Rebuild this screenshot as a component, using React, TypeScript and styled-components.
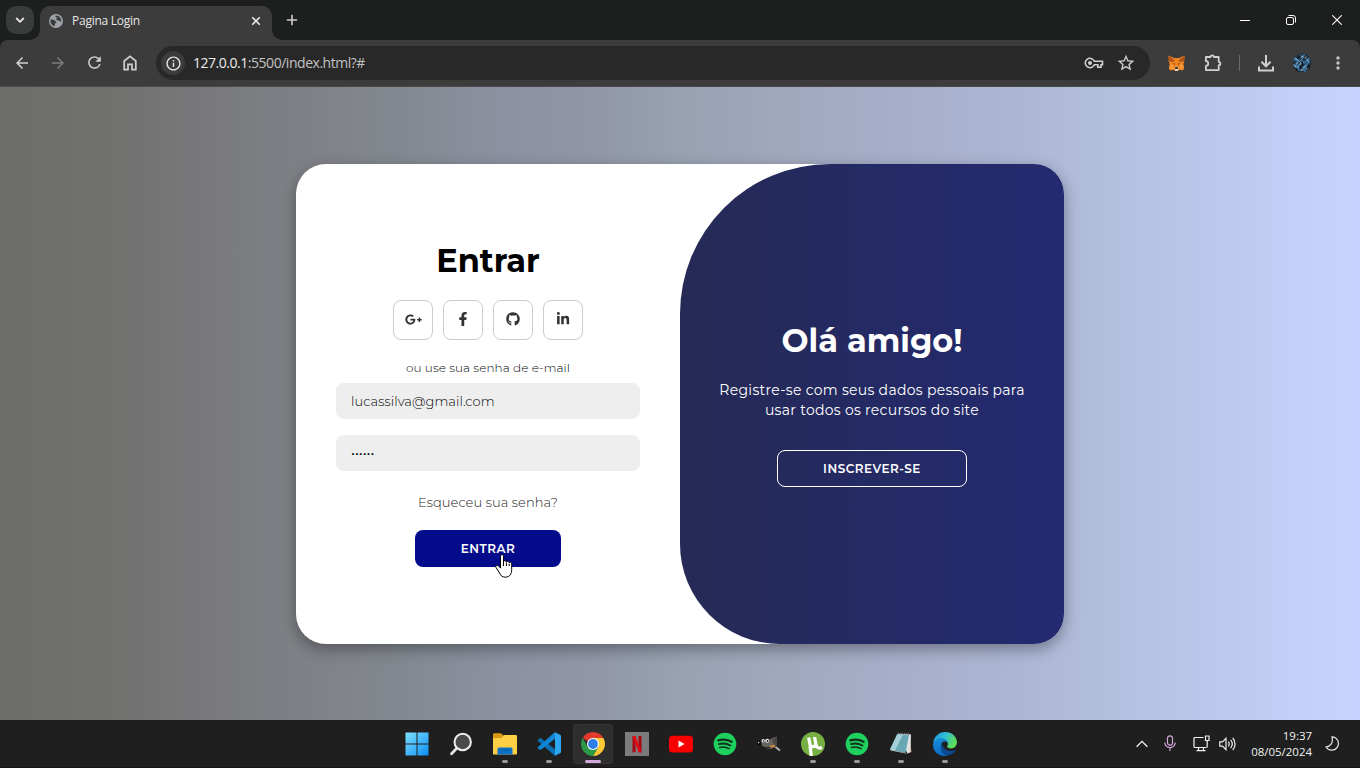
import React from "react";
import styled, { createGlobalStyle } from "styled-components";
import { FaGooglePlusG, FaFacebookF, FaGithub, FaLinkedinIn } from "react-icons/fa";
import {
  MdArrowBack,
  MdArrowForward,
  MdRefresh,
  MdInfoOutline,
  MdStarOutline,
  MdMoreVert,
} from "react-icons/md";

const GlobalStyle = createGlobalStyle`
  * { box-sizing: border-box; }
  body { margin: 0; overflow: hidden; background: #1c1f1e; }
  button, input { font-family: inherit; margin: 0; }
`;

const uiFont = `"Segoe UI", "Open Sans", "Noto Sans", sans-serif`;
const pageFont = `Montserrat, Inter, sans-serif`;

const Screen = styled.div`
  width: 1360px;
  height: 768px;
  display: flex;
  flex-direction: column;
  overflow: hidden;
  font-family: ${uiFont};
`;

/* ---------- browser ---------- */

const TabStrip = styled.header`
  height: 40px;
  flex: none;
  display: flex;
  background: #1c1f1e;
  padding-left: 6px;
`;

const TabSearch = styled.button`
  width: 28px;
  height: 28px;
  margin-top: 6px;
  border: 0;
  padding: 0;
  border-radius: 10px;
  background: #3a3b3b;
  display: grid;
  place-items: center;
`;

const Tab = styled.div`
  position: relative;
  width: 232px;
  height: 34px;
  margin: 6px 0 0 6px;
  padding: 0 10px 5px 9px;
  border-radius: 10px 10px 0 0;
  background: #3c3c3c;
  display: flex;
  align-items: center;
  color: #e6e6e6;

  &::before,
  &::after {
    content: "";
    position: absolute;
    bottom: 0;
    width: 10px;
    height: 10px;
  }
  &::before {
    left: -10px;
    background: radial-gradient(circle at 0 0, transparent 9.5px, #3c3c3c 10px);
  }
  &::after {
    right: -10px;
    background: radial-gradient(circle at 100% 0, transparent 9.5px, #3c3c3c 10px);
  }
`;

const TabTitle = styled.span`
  flex: 1;
  margin-left: 9px;
  font-size: 12px;
  letter-spacing: -0.25px;
`;

const NewTab = styled.div`
  margin: 14px 0 0 14px;
  height: 12px;
  display: flex;
`;

const WindowButtons = styled.div`
  margin-left: auto;
  height: 40px;
  display: flex;
`;

const WindowButton = styled.div`
  width: 46px;
  display: grid;
  place-items: center;
`;

const ToolbarBack = styled.div`
  height: 47px;
  flex: none;
  background: #1c1f1e;
`;

const Toolbar = styled.div`
  height: 47px;
  padding-bottom: 1px;
  border-radius: 8px 8px 0 0;
  background: #3c3c3c;
  border-bottom: 1px solid #4a4a4b;
  display: flex;
  align-items: center;
  color: #c7c7c7;
`;

const NavButton = styled.div<{ $dim?: boolean }>`
  width: 36px;
  height: 34px;
  display: grid;
  place-items: center;
  color: ${(p) => (p.$dim ? "#7c7c7c" : "#cfcfcf")};
`;

const NavGroup = styled.div`
  display: flex;
  padding: 0 8px 0 4px;
`;

const AddressBar = styled.div`
  width: 994px;
  height: 34px;
  flex: none;
  margin-top: 1px;
  border-radius: 17px;
  background: #282828;
  display: flex;
  align-items: center;
  padding: 0 14px 0 5px;
`;

const SiteInfo = styled.span`
  width: 24px;
  height: 24px;
  border-radius: 50%;
  background: #3c3c3c;
  color: #e6e6e6;
  display: grid;
  place-items: center;
`;

const Url = styled.span`
  flex: 1;
  margin-left: 8px;
  padding-bottom: 2px;
  font-size: 14px;
  letter-spacing: -0.47px;
  color: #c3c3c3;

  b {
    font-weight: 400;
    color: #ececec;
  }
`;

const AddressActions = styled.span`
  display: flex;
  align-items: center;
  gap: 12px;
  color: #d0d0d0;
`;

const Extensions = styled.div`
  width: 194px;
  flex: none;
  overflow: hidden;
  display: flex;
  align-items: center;
  margin: 1px 0 0 16px;
`;

const Slot = styled.span<{ $w: number }>`
  width: ${(p) => p.$w}px;
  height: 24px;
  flex: none;
  display: grid;
  place-items: center;
`;

const Separator = styled.span`
  width: 1px;
  height: 16px;
  flex: none;
  background: #6a6a6a;
`;

/* ---------- login page ---------- */

const Page = styled.main`
  height: 633px;
  flex: none;
  padding-top: 77px;
  font-family: ${pageFont};
  background: linear-gradient(
    to right,
    #6c6d6a 0,
    #727271 130px,
    #7b7c80 240px,
    #7f8187 310px,
    #838890 400px,
    #8b91a0 500px,
    #9197a8 600px,
    #98a2b2 680px,
    #a0a8bd 780px,
    #a7aeca 900px,
    #abb5d2 1000px,
    #b1bedc 1100px,
    #bac7ea 1200px,
    #c1cef5 1280px,
    #c8d4ff 1360px
  );
`;

const Card = styled.section`
  width: 768px;
  height: 480px;
  margin: 0 auto;
  border-radius: 30px;
  background: #fff;
  overflow: hidden;
  box-shadow: 0 5px 15px rgba(0, 0, 0, 0.35);
  display: flex;
`;

const Form = styled.form`
  width: 384px;
  padding: 77px 40px 0;
  display: flex;
  flex-direction: column;
  align-items: center;
`;

const Title = styled.h1`
  margin: 0;
  height: 40px;
  font-size: 32px;
  line-height: 40px;
  font-weight: 700;
  white-space: nowrap;
`;

const SocialRow = styled.div`
  display: flex;
  gap: 10px;
  margin: 19px 0 20px;
`;

const SocialLink = styled.a`
  width: 40px;
  height: 40px;
  padding-bottom: 2px;
  border: 1px solid #ccc;
  border-radius: 8px;
  display: grid;
  place-items: center;
  color: #333;
`;

const Hint = styled.span`
  height: 16px;
  font-size: 12px;
  line-height: 16px;
  font-weight: 300;
  color: #000;
  white-space: nowrap;
  letter-spacing: 0.09px;
`;

const Field = styled.input`
  width: 304px;
  height: 36px;
  flex: none;
  border: 0;
  border-radius: 8px;
  padding: 0 15px;
  background: #eee;
  font-size: 13px;
  font-weight: 300;
  color: #000;
  letter-spacing: 0.07px;

  & + & {
    margin-top: 16px;
  }
  ${Hint} + & {
    margin-top: 7px;
  }
  &[type="password"] {
    font-weight: 400;
    color: #000;
  }
`;

const Forgot = styled.a`
  height: 16px;
  margin: 23px 0 20px;
  font-size: 13px;
  line-height: 16px;
  font-weight: 300;
  color: #222;
  white-space: nowrap;
  letter-spacing: 0.08px;
`;

const Button = styled.button<{ $outline?: boolean }>`
  width: ${(p) => (p.$outline ? 190 : 146)}px;
  height: 37px;
  padding: 0;
  border: 1px solid ${(p) => (p.$outline ? "#fff" : "transparent")};
  border-radius: 8px;
  background: ${(p) => (p.$outline ? "transparent" : "#050c8c")};
  color: #fff;
  font-size: 12px;
  font-weight: 600;
  letter-spacing: 0.5px;
`;

const Welcome = styled.div`
  width: 384px;
  padding: 157px 30px 0;
  border-radius: 150px 0 0 100px;
  background: linear-gradient(to right, #262a55, #242a62 45%, #232a70);
  color: #fff;
  display: flex;
  flex-direction: column;
  align-items: center;
`;

const Message = styled.p`
  margin: 19px 0 30px;
  font-size: 14px;
  line-height: 20px;
  text-align: center;
  white-space: nowrap;
  letter-spacing: 0.3px;
`;

const Pointer = styled.svg`
  position: absolute;
  left: 495px;
  top: 554px;
`;

/* ---------- taskbar ---------- */

const Taskbar = styled.footer`
  height: 48px;
  flex: none;
  background: #1f1f1f;
  border-bottom: 1px solid #1c1219;
  display: flex;
`;

const Apps = styled.div`
  display: flex;
  gap: 4px;
  margin-left: 396.500px;
  padding-top: 4px;
`;

const AppButton = styled.div<{ $active?: boolean }>`
  width: 40px;
  height: 40px;
  position: relative;
  border-radius: 4px;
  display: grid;
  place-items: center;
  background: ${(p) => (p.$active ? "#2e2e2e" : "transparent")};
  box-shadow: ${(p) => (p.$active ? "inset 0 0 0 1px #363636" : "none")};
`;

const Indicator = styled.i<{ $active?: boolean }>`
  position: absolute;
  bottom: 1px;
  left: ${(p) => (p.$active ? 12 : 17)}px;
  width: ${(p) => (p.$active ? 16 : 6)}px;
  height: 3px;
  border-radius: 2px;
  background: ${(p) => (p.$active ? "#d3a6dc" : "#9a9a9a")};
`;

const Tray = styled.div`
  margin-left: auto;
  display: flex;
  align-items: center;
  color: #f2f2f2;
`;

const Clock = styled.div`
  width: 78px;
  margin-right: 13px;
  text-align: right;
  font-size: 11.500px;
  line-height: 16px;
  letter-spacing: -0.02px;
`;

/* ---------- drawings ---------- */

const Globe = () => (
  <svg width="14" height="14" viewBox="0 0 14 14">
    <circle cx="7" cy="7" r="7" fill="#9da2a8" />
    <path d="M1.700 5.600h2.500c1.200 0 1.300 1.500 2.300 1.600 1.200.1 1.100 1.300.4 1.700s-1.200.7-.9 1.700c.3.900-.4 1.400-1.100 1.300C2.700 11 1.500 9.300 1.400 7.200c0-.6.100-1.100.3-1.600zM6.700 1.500c-.6.900-.2 1.800.8 1.900s1 1.200 0 1.400.2 1.800 1.700 1.600 1.300 1.400 2.900 1.200c.5-2.700-1.300-6-5.400-6.100z" fill="#3c3c3c" />
  </svg>
);

const Fox = () => (
  <svg width="17" height="16" viewBox="0 0 17 16">
    <path d="M.5.5 6 3h5L16.500.5l-.3 6-.9 3.200 1 3.200-1.400 2.500-3.500-.6-1.600 1.200H7.200l-1.600-1.200-3.500.6L.7 12.900l1-3.200-.9-3.200z" fill="#f08421" />
    <path d="M.5.5 6.500 5.200 5.300 7 .8 6.500zM16.500.5l-6 4.700L11.700 7l4.500-.5z" fill="#b0551f" />
    <path d="M1.700 9.700 5 9.500l.8 4.200-3.700.5zM15.300 9.700 12 9.500l-.8 4.200 3.700.5z" fill="#f79a3c" />
    <path d="M4.700 8.800 7 9.700l-.3-1.300zM12.300 8.800 10 9.700l.3-1.300z" fill="#3a2c2c" />
    <path d="M6.500 12.500 7 15.800h3l.5-3.300z" fill="#e8dcd6" />
    <path d="M7.200 12.300h2.600l.2 1.700H7z" fill="#2d2526" />
  </svg>
);

const Avatar = () => (
  <svg width="20" height="20" viewBox="0 0 20 20">
    <clipPath id="avatar"><circle cx="10" cy="10" r="9.700" /></clipPath>
    <g clipPath="url(#avatar)" fill="none" strokeLinecap="round">
      <rect width="20" height="20" fill="#263443" />
      <path d="M2 6l4 2-2 4 3 5M12 2l-3 5 3 3 5-4M16 10l-4 4 1 4" stroke="#35709f" strokeWidth="2" />
      <path d="M3 5l3 2M9 10l-3 4M15 6l2 3M11 15l3-2M2 12l2 2M9 17h2" stroke="#6fa8cf" strokeWidth="1.300" />
      <path d="M9 3l2 1M7 8l1 1M14 15l1 1M5 10v1M13 5l1-1" stroke="#aebfc9" strokeWidth="1" />
      <path d="M10 9l1 3M4 16l2 2M17 12v3M7 3 6 5M8 13l1 2" stroke="#101820" strokeWidth="1.400" />
    </g>
  </svg>
);

const Download = () => (
  <svg width="16" height="17" viewBox="0 0 16 17" fill="none" stroke="#cfcfcf" strokeWidth="2">
    <path d="M8 0v11M3.500 6.800 8 11.300l4.500-4.500M1 11.500V15.500h14v-4" />
  </svg>
);

const Home = () => (
  <svg width="14" height="16" viewBox="0 0 14 16" fill="none" stroke="currentColor" strokeWidth="1.700">
    <path d="M1.200 6 7 1.300 12.800 6v8.600H9V9.300H5v5.300H1.200z" />
  </svg>
);

const Windows = () => (
  <svg width="24" height="24" viewBox="0 0 24 24">
    <linearGradient id="win" x1="0" y1="0" x2="1" y2="1">
      <stop stopColor="#7fe3ff" /><stop offset="1" stopColor="#0a8df5" />
    </linearGradient>
    <path fill="url(#win)" d="M.5.500h11v11H.5zM12.500.500h11v11h-11zM.5 12.500h11v11H.5zM12.500 12.500h11v11h-11z" />
  </svg>
);

const Search = () => (
  <svg width="24" height="24" viewBox="0 0 24 24">
    <path d="M2.500 21.800 8 16" stroke="#e3e3e3" strokeWidth="2.800" strokeLinecap="round" />
    <circle cx="13.700" cy="10" r="8.200" fill="#4a4a4a" stroke="#efefef" strokeWidth="2" />
  </svg>
);

const Folder = () => (
  <svg width="26" height="24" viewBox="0 0 26 24">
    <path d="M1 3C1 1.800 1.600 1.300 2.500 1.300H9l2.500 2.200L9 7H1z" fill="#dc9a14" />
    <path d="M1 6h8l3-3h11.500c1 0 1.500.6 1.500 1.500V21.500c0 .8-.4 1-1 1H2c-.6 0-1-.3-1-1z" fill="#fccf45" />
    <path d="M5.500 22.500v-5c0-1.500.8-2 2-2h11c1.200 0 2 .6 2 2v5z" fill="#0c73c9" />
    <path d="M8.500 18h9" stroke="#0a5cab" strokeWidth="1.200" />
  </svg>
);

const Code = () => (
  <svg width="24" height="24" viewBox="0 0 24 24">
    <path d="M.4 8.600 2.500 6.300 4 6.300 18 17.300V24z" fill="#0a70b8" />
    <path d="M.4 15.400 2.500 17.700 4 17.700 18 6.700V0z" fill="#0f86d4" />
    <path d="M17.500 0 23 2.700c.6.300 1 .8 1 1.500v15.600c0 .7-.4 1.200-1 1.500L17.500 24c.3-.4.500-.9.500-1.500v-21c0-.6-.2-1.100-.5-1.500z" fill="#2ca6ef" />
  </svg>
);

const Chrome = () => (
  <svg width="24" height="24" viewBox="0 0 24 24">
    <path d="M12 12 1.610 6A12 12 0 0 1 22.390 6z" fill="#e33b2e" />
    <path d="M12 12V6h10.390A12 12 0 0 1 12 24l5.200-9z" fill="#fcc934" />
    <path d="M12 12 17.200 15 12 24A12 12 0 0 1 1.610 6l5.200 9z" fill="#2b9a48" />
    <circle cx="12" cy="12" r="6" fill="#fff" />
    <circle cx="12" cy="12" r="4.900" fill="#2f7de8" />
  </svg>
);

const Netflix = () => (
  <svg width="24" height="24" viewBox="0 0 24 24">
    <rect width="24" height="24" fill="#7b7b7b" />
    <path d="M7.500 4h3v16l-3 .4zM13.500 4h3v16.400l-3-.4z" fill="#a90711" />
    <path d="M7.500 4h3l6 16.400-3-.4z" fill="#e50914" />
  </svg>
);

const YouTube = () => (
  <svg width="24" height="24" viewBox="0 0 24 24">
    <rect y="3.800" width="24" height="16.600" rx="3.500" fill="#f80000" />
    <path d="M9.500 8.500v7l6-3.500z" fill="#fff" />
  </svg>
);

const Spotify = () => (
  <svg width="24" height="24" viewBox="0 0 24 24">
    <circle cx="12" cy="12" r="11.300" fill="#1ed05d" />
    <g fill="none" stroke="#14301d" strokeLinecap="round">
      <path d="M5.300 8.400c4.500-1.200 9.200-.8 13.300 1.400" strokeWidth="2.200" />
      <path d="M5.900 12.100c4-1 8-.600 11.500 1.400" strokeWidth="1.900" />
      <path d="M6.600 15.500c3.400-.8 6.700-.4 9.500 1.200" strokeWidth="1.500" />
    </g>
  </svg>
);

const Gimp = () => (
  <svg width="24" height="24" viewBox="0 0 24 24">
    <path d="M4 8.500c2 0 3 .5 4.500 0 2 .8 3.500 0 5-1.500L19.500 4.500l.5 5c.5 4-2 6.800-6 7.200-5 .4-8.500-1.200-9.500-4.200z" fill="#68645e" />
    <path d="M19.500 4.500l.5 5c.3 2.300-.5 4-1.700 5.500L15 8z" fill="#4b4844" />
    <circle cx="2.200" cy="11.300" r="2.200" fill="#080808" />
    <circle cx="1.600" cy="10.600" r=".8" fill="#ddd" />
    <circle cx="6.300" cy="8.700" r="1.700" fill="#eee" /><circle cx="10.300" cy="8.700" r="2" fill="#eee" />
    <circle cx="6.500" cy="9" r=".8" fill="#111" /><circle cx="10.600" cy="9" r=".9" fill="#111" />
    <path d="M5 14.500c3 1.300 6 1.500 9 .5" stroke="#1a1a1a" fill="none" />
    <path d="M13 14.500 18 14" stroke="#cf8637" strokeWidth="1.800" />
    <path d="m18.500 15 4.500 3.500" stroke="#b9b9b9" strokeWidth="1.800" />
  </svg>
);

const Torrent = () => (
  <svg width="24" height="24" viewBox="0 0 24 24">
    <circle cx="12" cy="12" r="12" fill="#76b043" />
    <path d="M7.700 5.500 9 12.500c.5 3 5.800 2.800 5.800-.5L13.500 5M15 13c1 3 3 3.700 6 2.500M9 14l1.300 10" fill="none" stroke="#fff" strokeWidth="3.300" />
  </svg>
);

const Notepad = () => (
  <svg width="24" height="24" viewBox="0 0 24 24">
    <path d="m20 2 2.500 18-4 1.500z" fill="#b58d62" />
    <path d="M8.500 1.500 22 2.500 21.500 20l-3 1.500z" fill="#dfe4e2" />
    <path d="M8.300 2 20 3l-3.500 18L1 17.500z" fill="#6aa7b5" />
    <path d="M8.300 2 14 2.500 6 18.600l-5-1.100z" fill="#a5d0d8" />
    <path d="M1 17.500 16.500 21l2 .8-16.500-3.300z" fill="#dfe7e8" />
    <path d="M9 1.500h12" stroke="#68615c" strokeWidth="1.500" strokeDasharray="1 1" />
  </svg>
);

const Edge = () => (
  <svg width="24" height="24" viewBox="0 0 24 24">
    <linearGradient id="edgeTop" x1="0" x2="1" y2=".4">
      <stop stopColor="#1b8fd8" /><stop offset=".5" stopColor="#2fbfd8" /><stop offset="1" stopColor="#5fdc58" />
    </linearGradient>
    <linearGradient id="edgeLow" x1="0" x2=".4" y2="1">
      <stop stopColor="#1a92de" /><stop offset="1" stopColor="#0b68c0" />
    </linearGradient>
    <path d="M.2 11C.8 4.800 5.700 0 12 0c7 0 12 4.900 12 10.300 0 3.800-2.800 6.100-6 6.100-2.300 0-4-.7-4-1.800 0-.6.9-1 .9-2.900C14.900 9 12 7 8.500 7 4.800 7 1.700 8.800.2 11z" fill="url(#edgeTop)" />
    <path d="M.1 12C.6 8.800 4 6.300 8 6.300c4.100 0 6.900 2.400 6.900 5.300-.4-1.200-1.500-2-3-2-2.500 0-4 2.100-4 4.600C7.900 19 11 23 15 23.600 7 25.800-.8 20 .1 12z" fill="url(#edgeLow)" />
    <path d="M9 10.800c-3.500 5.700 1 13 7.500 12.300 2.700-.6 5-2.300 6.200-4.500.3-.5-.1-.8-.6-.6C16.500 20.500 9.500 18 9 10.800z" fill="#0c4a94" />
  </svg>
);

const apps: { icon: () => React.ReactElement; running?: boolean; active?: boolean }[] = [
  { icon: Windows },
  { icon: Search },
  { icon: Folder, running: true },
  { icon: Code, running: true },
  { icon: Chrome, running: true, active: true },
  { icon: Netflix },
  { icon: YouTube },
  { icon: Spotify },
  { icon: Gimp },
  { icon: Torrent, running: true },
  { icon: Spotify, running: true },
  { icon: Notepad, running: true },
  { icon: Edge, running: true },
];

export default function App() {
  return (
    <Screen>
      <GlobalStyle />
      <TabStrip>
        <TabSearch>
          <svg width="10" height="6" viewBox="0 0 10 6" fill="none" stroke="#e6e6e6" strokeWidth="1.800"><path d="m1.200 1 3.800 3.800L8.800 1" /></svg>
        </TabSearch>
        <Tab>
          <Globe />
          <TabTitle>Pagina Login</TabTitle>
          <svg width="12" height="12" viewBox="0 0 12 12" stroke="#e6e6e6" strokeWidth="1.600"><path d="m2.200 2.200 7.600 7.600M9.800 2.200 2.200 9.800" /></svg>
        </Tab>
        <NewTab>
          <svg width="12" height="12" viewBox="0 0 12 12" stroke="#cfcfcf" strokeWidth="1.600"><path d="M6 .8v10.400M.8 6h10.400" /></svg>
        </NewTab>
        <WindowButtons>
          <WindowButton><svg width="10" height="10" viewBox="0 0 10 10" stroke="#fff"><path d="M0 5.500h10" /></svg></WindowButton>
          <WindowButton>
            <svg width="10" height="10" viewBox="0 0 10 10" fill="none" stroke="#fff"><rect x=".5" y="2.500" width="7" height="7" rx="1.500" /><path d="M2.500.5h4.500a2.500 2.500 0 0 1 2.500 2.500v4.500" /></svg>
          </WindowButton>
          <WindowButton><svg width="10" height="10" viewBox="0 0 10 10" stroke="#fff" strokeWidth="1.100"><path d="m.3.3 9.400 9.400M9.700.3.3 9.700" /></svg></WindowButton>
        </WindowButtons>
      </TabStrip>
      <ToolbarBack>
        <Toolbar>
          <NavGroup>
            <NavButton><MdArrowBack size={18} /></NavButton>
            <NavButton $dim><MdArrowForward size={18} /></NavButton>
            <NavButton><MdRefresh size={19} /></NavButton>
            <NavButton><Home /></NavButton>
          </NavGroup>
          <AddressBar>
            <SiteInfo><MdInfoOutline size={17} /></SiteInfo>
            <Url><b>127.0.0.1</b>:5500/index.html?#</Url>
            <AddressActions>
              <svg width="20" height="12" viewBox="0 0 20 12" fill="none" stroke="currentColor" strokeWidth="1.600">
                <path d="M10.300 4.200H18.500V7.800H17V10.300H13.800V7.800H10.300A4.700 4.700 0 1 1 10.300 4.200z" /><circle cx="6" cy="6" r="1.200" fill="currentColor" />
              </svg>
              <MdStarOutline size={20} />
            </AddressActions>
          </AddressBar>
          <Extensions>
            <Slot $w={20}><Fox /></Slot>
            <Slot $w={53}>
              <svg width="18" height="18" viewBox="0 0 18 18" fill="none" stroke="#cfcfcf" strokeWidth="1.800" strokeLinejoin="round">
                <path d="M1.900 3h4.600a1.700 1.700 0 0 1 3.400 0h4.800v4.800a1.700 1.700 0 0 1 0 3.400v4.900H1.900v-4.300a2.300 2.300 0 0 0 0-4.600z" />
              </svg>
            </Slot>
            <Separator />
            <Slot $w={52}><Download /></Slot>
            <Slot $w={20}><Avatar /></Slot>
            <Slot $w={52}><MdMoreVert size={20} /></Slot>
          </Extensions>
        </Toolbar>
      </ToolbarBack>
      <Page>
        <Card>
          <Form>
            <Title>Entrar</Title>
            <SocialRow>
              <SocialLink><FaGooglePlusG size={17} /></SocialLink>
              <SocialLink><FaFacebookF size={14} /></SocialLink>
              <SocialLink><FaGithub size={14} /></SocialLink>
              <SocialLink><FaLinkedinIn size={14} /></SocialLink>
            </SocialRow>
            <Hint>ou use sua senha de e-mail</Hint>
            <Field type="email" defaultValue="lucassilva@gmail.com" />
            <Field type="password" defaultValue="123456" />
            <Forgot>Esqueceu sua senha?</Forgot>
            <Button type="button">ENTRAR</Button>
          </Form>
          <Welcome>
            <Title>Olá amigo!</Title>
            <Message>
              Registre-se com seus dados pessoais para
              <br />
              usar todos os recursos do site
            </Message>
            <Button $outline>INSCREVER-SE</Button>
          </Welcome>
        </Card>
      </Page>
      <Taskbar>
        <Apps>
          {apps.map(({ icon: Icon, running, active }, i) => (
            <AppButton key={i} $active={active}>
              <Icon />
              {running && <Indicator $active={active} />}
            </AppButton>
          ))}
        </Apps>
        <Tray>
          <Slot $w={28}><svg width="12" height="8" viewBox="0 0 12 8" fill="none" stroke="#f2f2f2" strokeWidth="1.300"><path d="M.6 6.800 6 1.400l5.400 5.400" /></svg></Slot>
          <Slot $w={28}>
            <svg width="12" height="17" viewBox="0 0 12 17" fill="none" stroke="#d0a6d8" strokeWidth="1.200"><rect x="3.500" y=".8" width="5" height="9.400" rx="2.500" /><path d="M.8 7.500a5.200 5.200 0 0 0 10.400 0M6 12.700V16" /></svg>
          </Slot>
          <Slot $w={35}>
            <svg width="17" height="17" viewBox="0 0 17 17" fill="none" stroke="#f2f2f2" strokeWidth="1.200"><path d="M10.500 2.500H2a1 1 0 0 0-1 1v8a1 1 0 0 0 1 1h11.500M5.500 12.500v3M10.500 12.500v3M3.500 15.600h9M12.500 1h3.500v4.500h-3.500zM14.200 5.500v7" /></svg>
          </Slot>
          <Slot $w={15}>
            <svg width="17" height="14" viewBox="0 0 17 14" fill="none" stroke="#f2f2f2" strokeWidth="1.200"><path d="M.8 4.800h2.700L7 1.300v11.400L3.500 9.200H.8zM9.300 4.700c1 1.300 1 3.300 0 4.600M11.600 2.900c2 2.400 2 5.800 0 8.200M13.800 1c3 3.500 3 8.500 0 12" /></svg>
          </Slot>
          <Clock>19:37<br />08/05/2024</Clock>
          <svg width="15" height="15" viewBox="0 0 15 15" fill="none" stroke="#e8e8e8" strokeWidth="1.200"><path d="M7 .8a6.700 6.700 0 1 1-6 10.200C5.500 10.500 8.500 6.500 7 .8z" /></svg>
          <Slot $w={20} />
        </Tray>
      </Taskbar>
      <Pointer width="18" height="24" viewBox="0 0 18 24">
        <path d="M5.500 2.200c0-2 3-2 3 0v5.300c.5-1.200 2.800-1 2.900.5.500-1.100 2.700-.8 2.800.7.700-.9 2.500-.5 2.500 1v6c0 4-2 7.500-6.200 7.500-3.500 0-4.800-1.700-6-4.200L1 13.500c-.8-1.900 1-2.900 2.300-1.700l2.200 2.300z" fill="#fff" stroke="#000" strokeWidth="1" />
        <path d="M8.500 7v5M11.400 8.500V12M14.200 9.500V12" stroke="#000" strokeWidth="1" />
      </Pointer>
    </Screen>
  );
}
